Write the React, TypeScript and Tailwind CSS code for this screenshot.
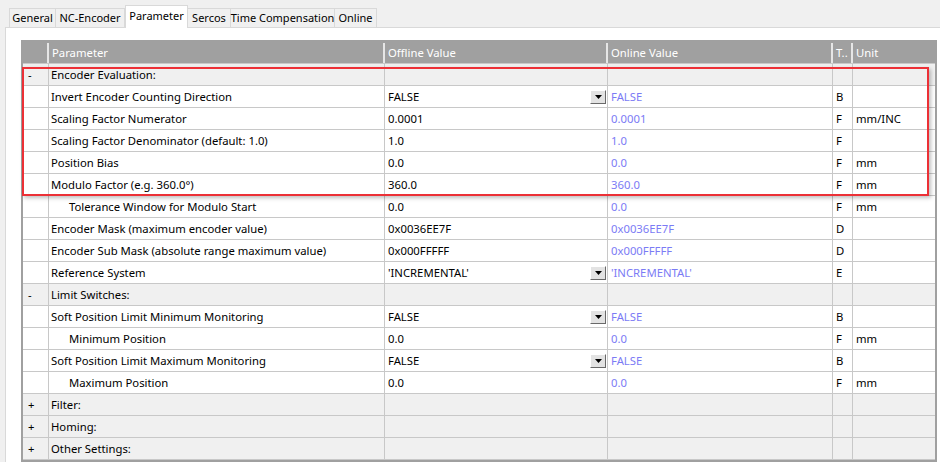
import React from "react";

type Row = {
  kind: "group" | "param";
  sign?: string;
  name: string;
  indent?: boolean;
  offline?: string;
  online?: string;
  dropdown?: boolean;
  type?: string;
  unit?: string;
};

const TABS = [
  { label: "General", width: "w-[47px]" },
  { label: "NC-Encoder", width: "w-[69px]" },
  { label: "Parameter", width: "w-[63px]" },
  { label: "Sercos", width: "w-[43px]" },
  { label: "Time Compensation", width: "w-[104px]" },
  { label: "Online", width: "w-[42px]" },
];

const ROWS: Row[] = [
  { kind: "group", sign: "-", name: "Encoder Evaluation:" },
  { kind: "param", name: "Invert Encoder Counting Direction", offline: "FALSE", online: "FALSE", dropdown: true, type: "B" },
  { kind: "param", name: "Scaling Factor Numerator", offline: "0.0001", online: "0.0001", type: "F", unit: "mm/INC" },
  { kind: "param", name: "Scaling Factor Denominator (default: 1.0)", offline: "1.0", online: "1.0", type: "F" },
  { kind: "param", name: "Position Bias", offline: "0.0", online: "0.0", type: "F", unit: "mm" },
  { kind: "param", name: "Modulo Factor (e.g. 360.0°)", offline: "360.0", online: "360.0", type: "F", unit: "mm" },
  { kind: "param", name: "Tolerance Window for Modulo Start", indent: true, offline: "0.0", online: "0.0", type: "F", unit: "mm" },
  { kind: "param", name: "Encoder Mask (maximum encoder value)", offline: "0x0036EE7F", online: "0x0036EE7F", type: "D" },
  { kind: "param", name: "Encoder Sub Mask (absolute range maximum value)", offline: "0x000FFFFF", online: "0x000FFFFF", type: "D" },
  { kind: "param", name: "Reference System", offline: "'INCREMENTAL'", online: "'INCREMENTAL'", dropdown: true, type: "E" },
  { kind: "group", sign: "-", name: "Limit Switches:" },
  { kind: "param", name: "Soft Position Limit Minimum Monitoring", offline: "FALSE", online: "FALSE", dropdown: true, type: "B" },
  { kind: "param", name: "Minimum Position", indent: true, offline: "0.0", online: "0.0", type: "F", unit: "mm" },
  { kind: "param", name: "Soft Position Limit Maximum Monitoring", offline: "FALSE", online: "FALSE", dropdown: true, type: "B" },
  { kind: "param", name: "Maximum Position", indent: true, offline: "0.0", online: "0.0", type: "F", unit: "mm" },
  { kind: "group", sign: "+", name: "Filter:" },
  { kind: "group", sign: "+", name: "Homing:" },
  { kind: "group", sign: "+", name: "Other Settings:" },
];

function DropButton() {
  return (
    <span className="ml-auto mr-[1px] flex h-[14px] w-[16px] items-center justify-center border border-t-[#fff] border-l-[#fff] border-b-[#696969] border-r-[#696969] bg-[#e3e3e3]">
      <svg width="7" height="4" viewBox="0 0 7 4">
        <path d="M0 0h7L3.5 4z" fill="#000" />
      </svg>
    </span>
  );
}

function TableRow({ row }: { row: Row }) {
  const group = row.kind === "group";
  const bg = group ? "bg-[#f0f0f0]" : "bg-white";
  const cell = "flex h-full items-center border-r border-[#c8c8c8] pt-[1px]";

  return (
    <div className={`flex h-[22px] border-b border-[#c8c8c8] ${bg}`}>
      <div className={`${cell} w-[26px] pl-[5px]`}>{row.sign}</div>
      <div className={`${cell} w-[336px] ${row.indent ? "pl-[20px]" : "pl-[2px]"}`}>{row.name}</div>
      <div className={`${cell} w-[223px] pl-[3px]`}>
        {row.offline}
        {row.dropdown && <DropButton />}
      </div>
      <div className={`${cell} w-[225px] pl-[3px] text-[#7b7bf5]`}>{row.online}</div>
      <div className={`${cell} w-[20px] pl-[3px]`}>{row.type}</div>
      <div className="flex h-full flex-1 items-center pl-[3px] pt-[1px]">{row.unit}</div>
    </div>
  );
}

export default function App() {
  return (
    <div
      className="relative h-[462px] w-[940px] overflow-hidden bg-[#f0f0f0] text-[11.3px] text-black"
      style={{ fontFamily: '"Segoe UI", "Noto Sans", sans-serif' }}
    >
      <div className="flex h-[27px] items-end pl-[9px]">
        {TABS.map((tab) => {
          const active = tab.label === "Parameter";
          return (
            <div
              key={tab.label}
              className={
                active
                  ? `relative z-10 -mb-[1px] flex h-[23px] ${tab.width} justify-center whitespace-nowrap border border-b-0 border-[#d9d9d9] bg-white pt-[2px] text-[11px]`
                  : `flex h-[19px] ${tab.width} items-center justify-center whitespace-nowrap border border-b-0 border-l-0 border-[#d9d9d9] bg-[#f0f0f0] pt-[1px] text-[11px] first:border-l`
              }
            >
              {tab.label}
            </div>
          );
        })}
      </div>

      <div className="ml-[5px] h-full border-l border-t border-[#d9d9d9] bg-white pl-[15px] pt-[12px]">
        <div className="w-[916px] border-l-2 border-r-2 border-t border-b-2 border-[#a0a0a0]">
          <div className="flex h-[23px] border-b border-[#c8c8c8] bg-[#a0a0a0] pt-[2px] text-white">
            <div className="h-full w-[26px] border-r-2 border-[#e6e6e6]" />
            <div className="flex h-full w-[336px] items-center border-r-2 border-[#e6e6e6] pl-[3px]">Parameter</div>
            <div className="flex h-full w-[223px] items-center border-r-2 border-[#e6e6e6] pl-[3px]">Offline Value</div>
            <div className="flex h-full w-[225px] items-center border-r-2 border-[#e6e6e6] pl-[3px]">Online Value</div>
            <div className="flex h-full w-[20px] items-center border-r-2 border-[#e6e6e6] pl-[3px]">T..</div>
            <div className="flex h-full flex-1 items-center pl-[3px]">Unit</div>
          </div>
          {ROWS.map((row) => (
            <TableRow key={row.name} row={row} />
          ))}
        </div>
      </div>

      <div className="pointer-events-none absolute left-[22px] top-[67px] h-[129px] w-[907px] border-2 border-[#ec3036] shadow-[2px_2px_4px_rgba(0,0,0,0.25)]" />
    </div>
  );
}
